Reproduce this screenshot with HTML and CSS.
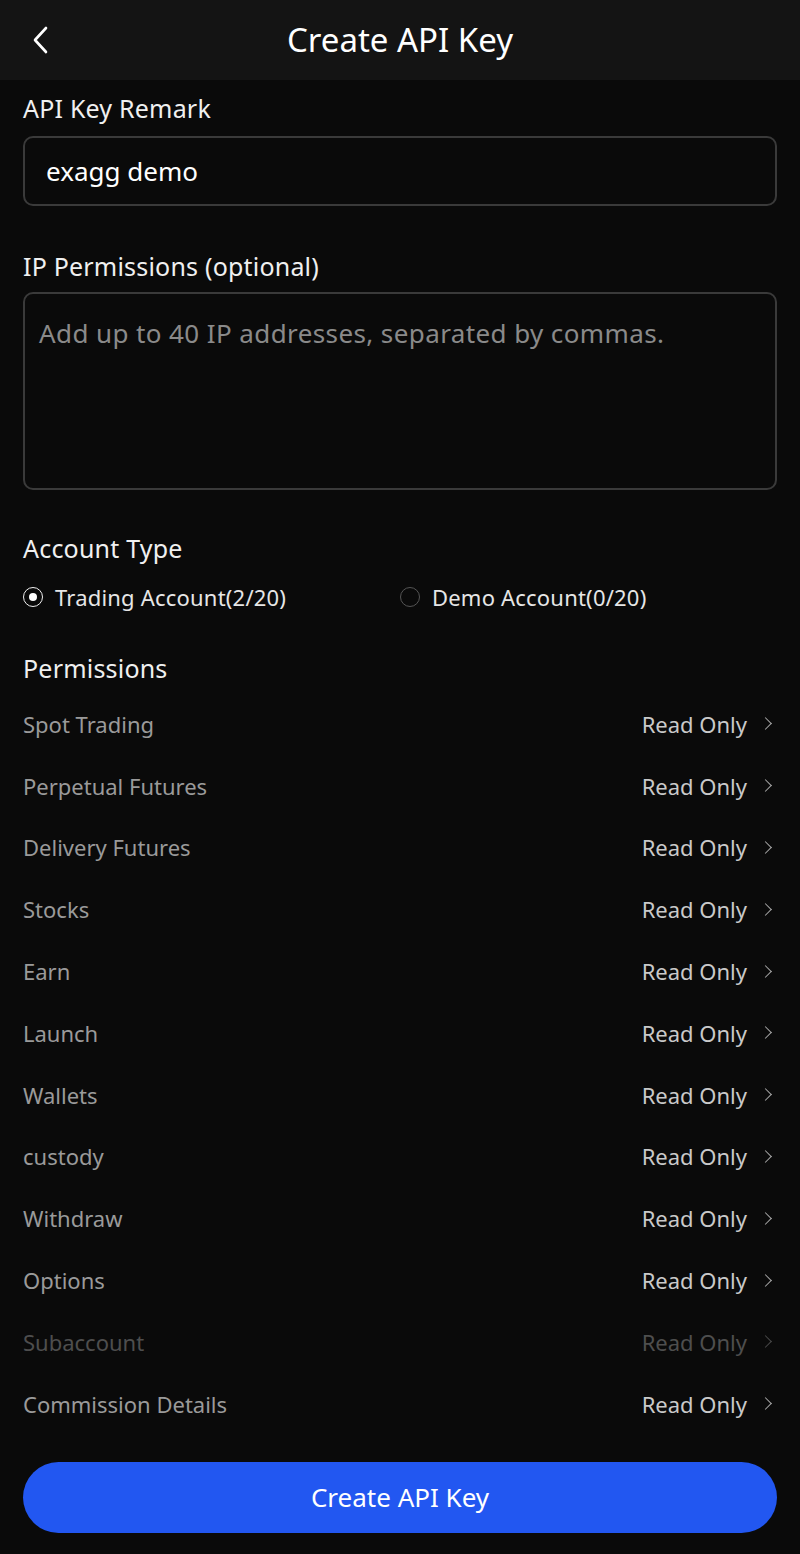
FILE: index.html
```html
<!DOCTYPE html>
<html lang="en">
<head>
<meta charset="utf-8">
<title>Create API Key</title>
<link rel="stylesheet" href="styles.css">
</head>
<body>
<div class="page">
  <header class="topbar">
    <span class="back">
      <svg width="18" height="28" viewBox="0 0 18 28"><path d="M15 2 L4 14 L15 26" fill="none" stroke="#ffffff" stroke-width="2.6" stroke-linecap="round" stroke-linejoin="round"/></svg>
    </span>
    <h1 class="title">Create API Key</h1>
  </header>

  <main class="content">
    <div class="label first">API Key Remark</div>
    <div class="field">exagg demo</div>

    <div class="label gap">IP Permissions (optional)</div>
    <div class="area">Add up to 40 IP addresses, separated by commas.</div>

    <div class="label gap acct">Account Type</div>
    <div class="radios">
      <div class="radio on"><span class="dot"></span><span>Trading Account(2/20)</span></div>
      <div class="radio"><span class="dot"></span><span>Demo Account(0/20)</span></div>
    </div>

    <div class="label perm-head">Permissions</div>
    <ul class="perms">
      <li class="row"><span class="name">Spot Trading</span><span class="val">Read Only<i class="chev"></i></span></li>
      <li class="row"><span class="name">Perpetual Futures</span><span class="val">Read Only<i class="chev"></i></span></li>
      <li class="row"><span class="name">Delivery Futures</span><span class="val">Read Only<i class="chev"></i></span></li>
      <li class="row"><span class="name">Stocks</span><span class="val">Read Only<i class="chev"></i></span></li>
      <li class="row"><span class="name">Earn</span><span class="val">Read Only<i class="chev"></i></span></li>
      <li class="row"><span class="name">Launch</span><span class="val">Read Only<i class="chev"></i></span></li>
      <li class="row"><span class="name">Wallets</span><span class="val">Read Only<i class="chev"></i></span></li>
      <li class="row"><span class="name">custody</span><span class="val">Read Only<i class="chev"></i></span></li>
      <li class="row"><span class="name">Withdraw</span><span class="val">Read Only<i class="chev"></i></span></li>
      <li class="row"><span class="name">Options</span><span class="val">Read Only<i class="chev"></i></span></li>
      <li class="row disabled"><span class="name">Subaccount</span><span class="val">Read Only<i class="chev"></i></span></li>
      <li class="row"><span class="name">Commission Details</span><span class="val">Read Only<i class="chev"></i></span></li>
    </ul>

    <button class="submit">Create API Key</button>
  </main>
</div>
</body>
</html>
```
FILE: styles.css
```css
* { box-sizing: border-box; }
html, body { margin: 0; padding: 0; background: #0a0a0a; }
body {
  font-family: "Noto Sans", "Open Sans", sans-serif;
  color: #f2f2f2;
  width: 800px;
  height: 1554px;
  overflow: hidden;
}
.topbar {
  height: 80px;
  background: #141414;
  display: flex;
  align-items: center;
  justify-content: center;
  position: relative;
}
.back {
  position: absolute;
  left: 31px;
  top: 26px;
  display: flex;
}
.title {
  margin: 0;
  font-size: 33px;
  font-weight: 400;
  color: #ffffff;
  line-height: 40px;
}
.content {
  padding: 0 23px;
  display: flex;
  flex-direction: column;
}
.label {
  font-size: 25px;
  letter-spacing: 0.2px;
  line-height: 30px;
  color: #f0f0f0;
  margin-bottom: 12px;
}
.label.first { margin-top: 13px; margin-bottom: 13px; }
.label.gap { margin-top: 45px; margin-bottom: 11px; }
.label.acct { margin-top: 43px; }
.field {
  height: 70px;
  border: 2px solid #3a3a3a;
  border-radius: 10px;
  display: flex;
  align-items: center;
  padding-left: 21px;
  font-size: 26px;
  color: #ffffff;
}
.area {
  height: 198px;
  border: 2px solid #3a3a3a;
  border-radius: 10px;
  padding: 22px 0 0 14px;
  font-size: 26px;
  letter-spacing: 0.4px;
  line-height: 34px;
  color: #8a8a8a;
}
.radios {
  display: flex;
  margin-top: 8px;
  height: 30px;
}
.radio {
  display: flex;
  align-items: center;
  gap: 12px;
  font-size: 22px;
  letter-spacing: 0.2px;
  color: #e6e6e6;
  width: 378px;
}
.radio .dot {
  width: 20px;
  height: 20px;
  border-radius: 50%;
  border: 1.5px solid #555555;
  display: flex;
  align-items: center;
  justify-content: center;
  flex-shrink: 0;
}
.radio.on .dot { border-color: #f0f0f0; }
.radio.on .dot::after {
  content: "";
  width: 8px;
  height: 8px;
  border-radius: 50%;
  background: #ffffff;
}
.perm-head { margin-top: 41px; margin-bottom: 10px; }
.perms {
  list-style: none;
  margin: 0;
  padding: 0;
}
.row {
  height: 61.8px;
  display: flex;
  align-items: center;
  justify-content: space-between;
  font-size: 22px;
}
.row .name { color: #9a9a9a; }
.row .val {
  color: #c9c9c9;
  display: flex;
  align-items: center;
}
.chev {
  display: inline-block;
  width: 9px;
  height: 9px;
  border-top: 1.8px solid #aaaaaa;
  border-right: 1.8px solid #aaaaaa;
  transform: rotate(45deg);
  margin-left: 14px;
  margin-right: 7px;
}
.row.disabled .name { color: #4e4e4e; }
.row.disabled .val { color: #4e4e4e; }
.row.disabled .chev { border-color: #4a4a4a; }
.submit {
  margin-top: 27px;
  height: 71px;
  border: none;
  border-radius: 36px;
  background: #2257f1;
  color: #ffffff;
  font-family: inherit;
  font-size: 26px;
}
```
